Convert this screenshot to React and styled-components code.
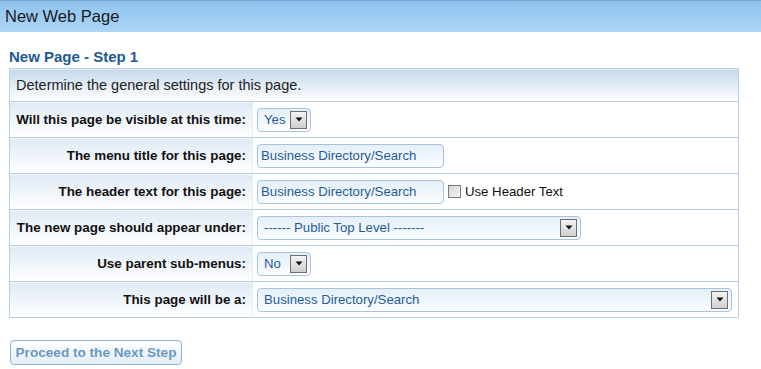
import styled, { createGlobalStyle } from 'styled-components'

const GlobalStyle = createGlobalStyle`
  body {
    margin: 0;
    background: #fff;
    font-family: Arial, "Liberation Sans", sans-serif;
  }
`

const rows = [
    { label: 'Will this page be visible at this time:', type: 'select', value: 'Yes', width: 54 },
    { label: 'The menu title for this page:', type: 'text', value: 'Business Directory/Search' },
    { label: 'The header text for this page:', type: 'text', value: 'Business Directory/Search', check: 'Use Header Text' },
    { label: 'The new page should appear under:', type: 'select', value: '------ Public Top Level -------', width: 324 },
    { label: 'Use parent sub-menus:', type: 'select', value: 'No', width: 54 },
    { label: 'This page will be a:', type: 'select', value: 'Business Directory/Search', width: 475 },
]

function Arrow() {
    return (
        <ArrowBox>
            <svg width='8' height='5' viewBox='0 0 8 5'>
                <path d='M0.5 0.5 L7.5 0.5 L4 4.5 Z' fill='#111' />
            </svg>
        </ArrowBox>
    )
}

function App() {
    return (
        <>
            <GlobalStyle />
            <TitleBar>New Web Page</TitleBar>
            <Content>
                <StepTitle>New Page - Step 1</StepTitle>
                <FormTable>
                    <tbody>
                        <tr>
                            <IntroCell colSpan={2}>Determine the general settings for this page.</IntroCell>
                        </tr>
                        {rows.map((row) => (
                            <tr key={row.label}>
                                <LabelCell>{row.label}</LabelCell>
                                <ValueCell>
                                    {row.type === 'text' ? (
                                        <Field>
                                            <TextBox>{row.value}</TextBox>
                                            {row.check && (
                                                <CheckLabel>
                                                    <CheckBox />
                                                    {row.check}
                                                </CheckLabel>
                                            )}
                                        </Field>
                                    ) : (
                                        <SelectBox $width={row.width}>
                                            <span>{row.value}</span>
                                            <Arrow />
                                        </SelectBox>
                                    )}
                                </ValueCell>
                            </tr>
                        ))}
                    </tbody>
                </FormTable>
                <NextButton>Proceed to the Next Step</NextButton>
            </Content>
        </>
    )
}

const TitleBar = styled.div`
  height: 31px;
  border-top: 1px solid #7aa8d4;
  background: linear-gradient(to bottom, #8ec3ee, #acd5f5);
  color: #1a1a1a;
  font-size: 16.5px;
  line-height: 31px;
  padding-left: 5px;
`

const Content = styled.div`
  padding: 17px 0 0 9px;
`

const StepTitle = styled.div`
  color: #1c5a96;
  font-size: 15px;
  font-weight: bold;
  height: 19px;
  line-height: 16px;
`

const FormTable = styled.table`
  width: 730px;
  border-collapse: collapse;
  border: 1px solid #b8cfe4;
`

const IntroCell = styled.td`
  height: 32px;
  padding: 0 0 0 6px;
  background: linear-gradient(to bottom, #c4d9eb, #ffffff);
  border-bottom: 1px solid #b8cfe4;
  font-size: 14.5px;
  color: #1e1e1e;
`

const LabelCell = styled.td`
  width: 236px;
  height: 35px;
  padding: 0 6px 0 0;
  text-align: right;
  font-size: 13.4px;
  font-weight: bold;
  color: #111;
  background: linear-gradient(to bottom, #dfeaf5, #ffffff);
  border-bottom: 1px solid #b8cfe4;
  border-right: 1px solid #e4ecf4;
`

const ValueCell = styled.td`
  padding: 0 0 0 4px;
  border-bottom: 1px solid #b8cfe4;
`

const Field = styled.div`
  display: flex;
  align-items: center;
  gap: 4px;
`

const inputLook = `
  box-sizing: border-box;
  height: 24px;
  border: 1px solid #a7c3df;
  border-radius: 4px;
  background: linear-gradient(to bottom, #e4eff9, #fbfdff);
  color: #1f5c99;
  font-size: 13.2px;
`

const TextBox = styled.div`
  ${inputLook}
  width: 187px;
  padding-left: 3px;
  line-height: 22px;
`

const SelectBox = styled.div`
  ${inputLook}
  width: ${props => props.$width}px;
  display: flex;
  align-items: center;
  justify-content: space-between;
  padding: 0 3px 0 6px;
`

const ArrowBox = styled.span`
  box-sizing: border-box;
  width: 17px;
  height: 18px;
  border: 1px solid #6e6e6e;
  background: linear-gradient(to bottom, #f4f4f4, #cfcfcf);
  display: flex;
  align-items: center;
  justify-content: center;
`

const CheckLabel = styled.label`
  display: flex;
  align-items: center;
  gap: 4px;
  font-size: 13.2px;
  color: #111;
`

const CheckBox = styled.span`
  box-sizing: border-box;
  width: 13px;
  height: 13px;
  border: 1px solid #7a7a7a;
  background: linear-gradient(135deg, #d4d4d4, #f6f6f6);
`

const NextButton = styled.button`
  margin-top: 22px;
  margin-left: 1px;
  width: 172px;
  height: 25px;
  border: 1px solid #8fb2d3;
  border-radius: 4px;
  background: linear-gradient(to bottom, #ffffff, #e2edf7);
  color: #6a98c4;
  font-family: Arial, "Liberation Sans", sans-serif;
  font-size: 13.6px;
  font-weight: bold;
  padding: 0;
`

export default App
